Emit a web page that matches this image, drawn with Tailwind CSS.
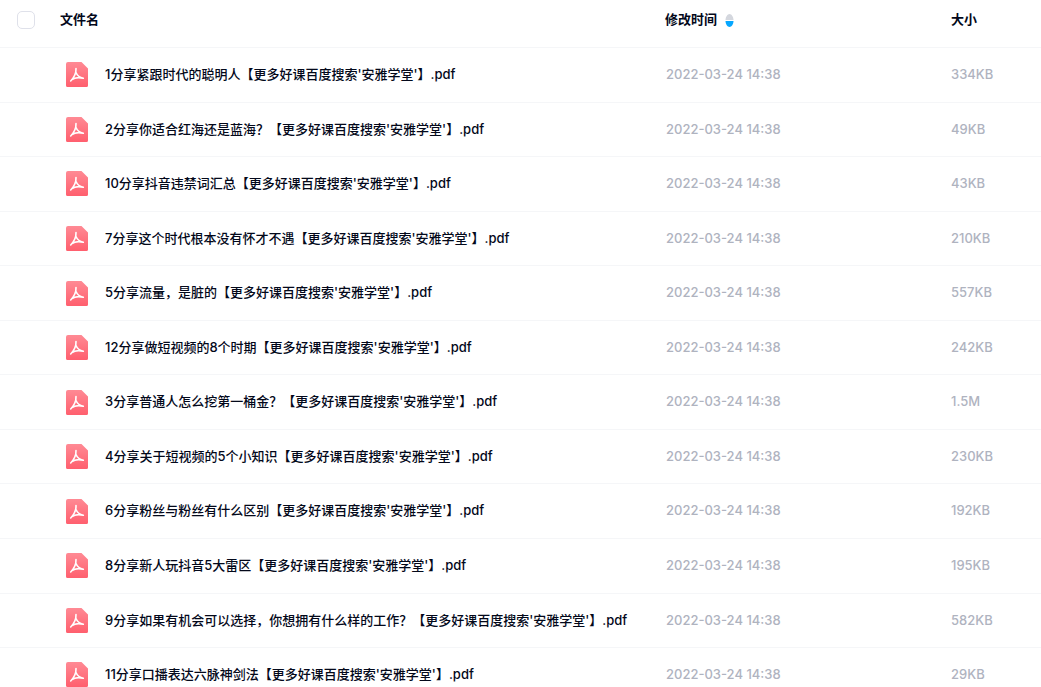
<!DOCTYPE html>
<html lang="zh-CN">
<head>
  <meta charset="UTF-8">
  <title>文件列表</title>
  <script src="https://cdn.jsdelivr.net/npm/@tailwindcss/browser@4"></script>
</head>
<body class="bg-white overflow-hidden font-['Inter','Noto_Sans_CJK_SC',sans-serif]">
  <svg class="absolute w-0 h-0">
    <defs>
      <linearGradient id="pdfFill" x1="0" y1="0" x2="0" y2="1">
        <stop offset="0" stop-color="#ff8a94"/>
        <stop offset="1" stop-color="#ff5f6e"/>
      </linearGradient>
      <symbol id="pdf" viewBox="0 0 22 25">
        <path fill="url(#pdfFill)" d="M2 0h13.500l6.500 6.500V23.500a1.500 1.500 0 0 1-1.500 1.500H1.500A1.500 1.500 0 0 1 0 23.500V2a2 2 0 0 1 2-2z"/>
        <path fill="none" stroke="#fff" stroke-width="1.600" stroke-linecap="round" stroke-linejoin="round" d="M10 6.500c.2 4-1.500 8.500-5.300 12.500M5.500 18c2.500-2 7-3 11.800-1.700M10 10.500c1 2.500 3.500 5 7.300 5.800"/>
      </symbol>
    </defs>
  </svg>
  <div class="w-[1041px] h-[687px] overflow-hidden">
    <!-- Header -->
    <div class="flex items-center h-[48.100px] pb-[7px] border-b border-[#f5f6f8] text-[13px] font-bold text-[#03081a]">
      <div class="w-[60px] pl-[17px]">
        <div class="w-[18px] h-[18px] rounded-[5px] border border-[#dfe1ea] bg-white"></div>
      </div>
      <div class="w-[605px]">文件名</div>
      <div class="w-[286px] flex items-center gap-[8px]">
        <span>修改时间</span>
        <svg class="w-[9px] h-[13px]" viewBox="0 0 9 13">
          <path fill="#d4d7de" d="M.5 6C.5 3 2.500 0 4.500 0s4 3 4 6z"/>
          <path fill="#06a7ff" d="M.5 7h8c0 3-2 6-4 6s-4-3-4-6z"/>
        </svg>
      </div>
      <div>大小</div>
    </div>

    <!-- Rows -->
    <div class="flex items-center h-[54.550px] border-b border-[#f5f6f8] text-[13px]">
      <div class="w-[105px] pl-[66px]"><svg class="w-[22px] h-[25px]"><use href="#pdf"/></svg></div>
      <div class="w-[561px] font-[450] text-[#03081a]">1分享紧跟时代的聪明人【更多好课百度搜索'安雅学堂'】.pdf</div>
      <div class="w-[285px] font-medium text-[#afb3bf]">2022-03-24 14:38</div>
      <div class="font-medium text-[#afb3bf]">334KB</div>
    </div>
    <div class="flex items-center h-[54.550px] border-b border-[#f5f6f8] text-[13px]">
      <div class="w-[105px] pl-[66px]"><svg class="w-[22px] h-[25px]"><use href="#pdf"/></svg></div>
      <div class="w-[561px] font-[450] text-[#03081a]">2分享你适合红海还是蓝海？【更多好课百度搜索'安雅学堂'】.pdf</div>
      <div class="w-[285px] font-medium text-[#afb3bf]">2022-03-24 14:38</div>
      <div class="font-medium text-[#afb3bf]">49KB</div>
    </div>
    <div class="flex items-center h-[54.550px] border-b border-[#f5f6f8] text-[13px]">
      <div class="w-[105px] pl-[66px]"><svg class="w-[22px] h-[25px]"><use href="#pdf"/></svg></div>
      <div class="w-[561px] font-[450] text-[#03081a]">10分享抖音违禁词汇总【更多好课百度搜索'安雅学堂'】.pdf</div>
      <div class="w-[285px] font-medium text-[#afb3bf]">2022-03-24 14:38</div>
      <div class="font-medium text-[#afb3bf]">43KB</div>
    </div>
    <div class="flex items-center h-[54.550px] border-b border-[#f5f6f8] text-[13px]">
      <div class="w-[105px] pl-[66px]"><svg class="w-[22px] h-[25px]"><use href="#pdf"/></svg></div>
      <div class="w-[561px] font-[450] text-[#03081a]">7分享这个时代根本没有怀才不遇【更多好课百度搜索'安雅学堂'】.pdf</div>
      <div class="w-[285px] font-medium text-[#afb3bf]">2022-03-24 14:38</div>
      <div class="font-medium text-[#afb3bf]">210KB</div>
    </div>
    <div class="flex items-center h-[54.550px] border-b border-[#f5f6f8] text-[13px]">
      <div class="w-[105px] pl-[66px]"><svg class="w-[22px] h-[25px]"><use href="#pdf"/></svg></div>
      <div class="w-[561px] font-[450] text-[#03081a]">5分享流量，是脏的【更多好课百度搜索'安雅学堂'】.pdf</div>
      <div class="w-[285px] font-medium text-[#afb3bf]">2022-03-24 14:38</div>
      <div class="font-medium text-[#afb3bf]">557KB</div>
    </div>
    <div class="flex items-center h-[54.550px] border-b border-[#f5f6f8] text-[13px]">
      <div class="w-[105px] pl-[66px]"><svg class="w-[22px] h-[25px]"><use href="#pdf"/></svg></div>
      <div class="w-[561px] font-[450] text-[#03081a]">12分享做短视频的8个时期【更多好课百度搜索'安雅学堂'】.pdf</div>
      <div class="w-[285px] font-medium text-[#afb3bf]">2022-03-24 14:38</div>
      <div class="font-medium text-[#afb3bf]">242KB</div>
    </div>
    <div class="flex items-center h-[54.550px] border-b border-[#f5f6f8] text-[13px]">
      <div class="w-[105px] pl-[66px]"><svg class="w-[22px] h-[25px]"><use href="#pdf"/></svg></div>
      <div class="w-[561px] font-[450] text-[#03081a]">3分享普通人怎么挖第一桶金？【更多好课百度搜索'安雅学堂'】.pdf</div>
      <div class="w-[285px] font-medium text-[#afb3bf]">2022-03-24 14:38</div>
      <div class="font-medium text-[#afb3bf]">1.5M</div>
    </div>
    <div class="flex items-center h-[54.550px] border-b border-[#f5f6f8] text-[13px]">
      <div class="w-[105px] pl-[66px]"><svg class="w-[22px] h-[25px]"><use href="#pdf"/></svg></div>
      <div class="w-[561px] font-[450] text-[#03081a]">4分享关于短视频的5个小知识【更多好课百度搜索'安雅学堂'】.pdf</div>
      <div class="w-[285px] font-medium text-[#afb3bf]">2022-03-24 14:38</div>
      <div class="font-medium text-[#afb3bf]">230KB</div>
    </div>
    <div class="flex items-center h-[54.550px] border-b border-[#f5f6f8] text-[13px]">
      <div class="w-[105px] pl-[66px]"><svg class="w-[22px] h-[25px]"><use href="#pdf"/></svg></div>
      <div class="w-[561px] font-[450] text-[#03081a]">6分享粉丝与粉丝有什么区别【更多好课百度搜索'安雅学堂'】.pdf</div>
      <div class="w-[285px] font-medium text-[#afb3bf]">2022-03-24 14:38</div>
      <div class="font-medium text-[#afb3bf]">192KB</div>
    </div>
    <div class="flex items-center h-[54.550px] border-b border-[#f5f6f8] text-[13px]">
      <div class="w-[105px] pl-[66px]"><svg class="w-[22px] h-[25px]"><use href="#pdf"/></svg></div>
      <div class="w-[561px] font-[450] text-[#03081a]">8分享新人玩抖音5大雷区【更多好课百度搜索'安雅学堂'】.pdf</div>
      <div class="w-[285px] font-medium text-[#afb3bf]">2022-03-24 14:38</div>
      <div class="font-medium text-[#afb3bf]">195KB</div>
    </div>
    <div class="flex items-center h-[54.550px] border-b border-[#f5f6f8] text-[13px]">
      <div class="w-[105px] pl-[66px]"><svg class="w-[22px] h-[25px]"><use href="#pdf"/></svg></div>
      <div class="w-[561px] font-[450] text-[#03081a]">9分享如果有机会可以选择，你想拥有什么样的工作？【更多好课百度搜索'安雅学堂'】.pdf</div>
      <div class="w-[285px] font-medium text-[#afb3bf]">2022-03-24 14:38</div>
      <div class="font-medium text-[#afb3bf]">582KB</div>
    </div>
    <div class="flex items-center h-[54.550px] border-b border-[#f5f6f8] text-[13px]">
      <div class="w-[105px] pl-[66px]"><svg class="w-[22px] h-[25px]"><use href="#pdf"/></svg></div>
      <div class="w-[561px] font-[450] text-[#03081a]">11分享口播表达六脉神剑法【更多好课百度搜索'安雅学堂'】.pdf</div>
      <div class="w-[285px] font-medium text-[#afb3bf]">2022-03-24 14:38</div>
      <div class="font-medium text-[#afb3bf]">29KB</div>
    </div>
  </div>
</body>
</html>
